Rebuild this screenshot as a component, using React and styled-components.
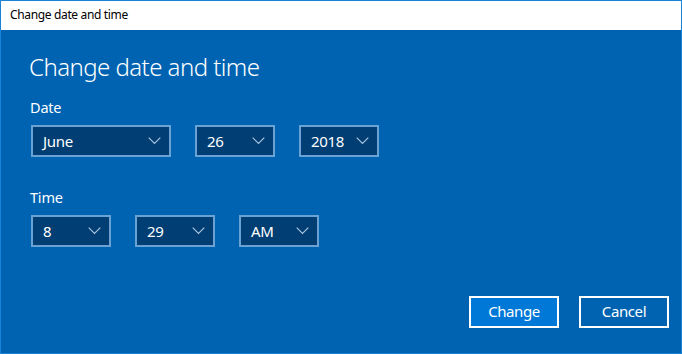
import React from "react";
import styled, { createGlobalStyle } from "styled-components";

const Global = createGlobalStyle`
  html, body { margin: 0; padding: 0; background: #0063b1; }
  * { box-sizing: border-box; }
`;

const Window = styled.div`
  width: 682px;
  height: 354px;
  border: 1px solid #1883d7;
  background: #0063b1;
  display: flex;
  flex-direction: column;
  font-family: "Noto Sans", "Open Sans", sans-serif;
  color: #fff;
  overflow: hidden;
`;

const TitleBar = styled.div`
  height: 29px;
  flex: none;
  background: #fff;
  color: #000;
  font-size: 12px;
  letter-spacing: -0.35px;
  line-height: 29px;
  padding-left: 9px;
  padding-bottom: 2px;
  display: flex;
  align-items: center;
`;

const Body = styled.div`
  flex: 1;
  display: flex;
  flex-direction: column;
  padding: 21px 12px 25px 30px;
`;

const Heading = styled.h1`
  margin: 0 0 0 -2px;
  font-size: 24px;
  letter-spacing: -0.55px;
  line-height: 32px;
  font-weight: 300;
`;

const Label = styled.div`
  font-size: 14.5px;
  letter-spacing: -0.2px;
  line-height: 20px;
  margin: ${(p) => p.$top}px 0 8px -1px;
`;

const Row = styled.div`
  display: flex;
  gap: 24px;
`;

const Select = styled.div`
  width: ${(p) => p.$w}px;
  height: 32px;
  border: 2px solid #6aa2d4;
  background: #003e73;
  display: flex;
  align-items: center;
  justify-content: space-between;
  padding: 0 8px 0 10px;
  font-size: 15px;
  letter-spacing: -0.3px;
`;

const Chevron = () => (
  <svg width="13" height="8" viewBox="0 0 13 8">
    <path d="M0.7 0.7 L6.5 6.5 L12.3 0.7" fill="none" stroke="#a9c3dc" strokeWidth="1.2" />
  </svg>
);

const Footer = styled.div`
  margin-top: auto;
  display: flex;
  justify-content: flex-end;
  gap: 20px;
`;

const Button = styled.button`
  width: 90px;
  height: 32px;
  border: 2px solid #fff;
  background: ${(p) => (p.$primary ? "#0078d7" : "transparent")};
  color: #fff;
  font-family: inherit;
  font-size: 15px;
  letter-spacing: -0.4px;
  padding: 0 0 2px;
`;

const Field = ({ w, value }) => (
  <Select $w={w}>
    <span>{value}</span>
    <Chevron />
  </Select>
);

export default function App() {
  return (
    <>
      <Global />
      <Window>
        <TitleBar>Change date and time</TitleBar>
        <Body>
          <Heading>Change date and time</Heading>
          <Label $top={14}>Date</Label>
          <Row>
            <Field w={140} value="June" />
            <Field w={80} value="26" />
            <Field w={80} value="2018" />
          </Row>
          <Label $top={30}>Time</Label>
          <Row>
            <Field w={80} value="8" />
            <Field w={80} value="29" />
            <Field w={80} value="AM" />
          </Row>
          <Footer>
            <Button $primary>Change</Button>
            <Button>Cancel</Button>
          </Footer>
        </Body>
      </Window>
    </>
  );
}
